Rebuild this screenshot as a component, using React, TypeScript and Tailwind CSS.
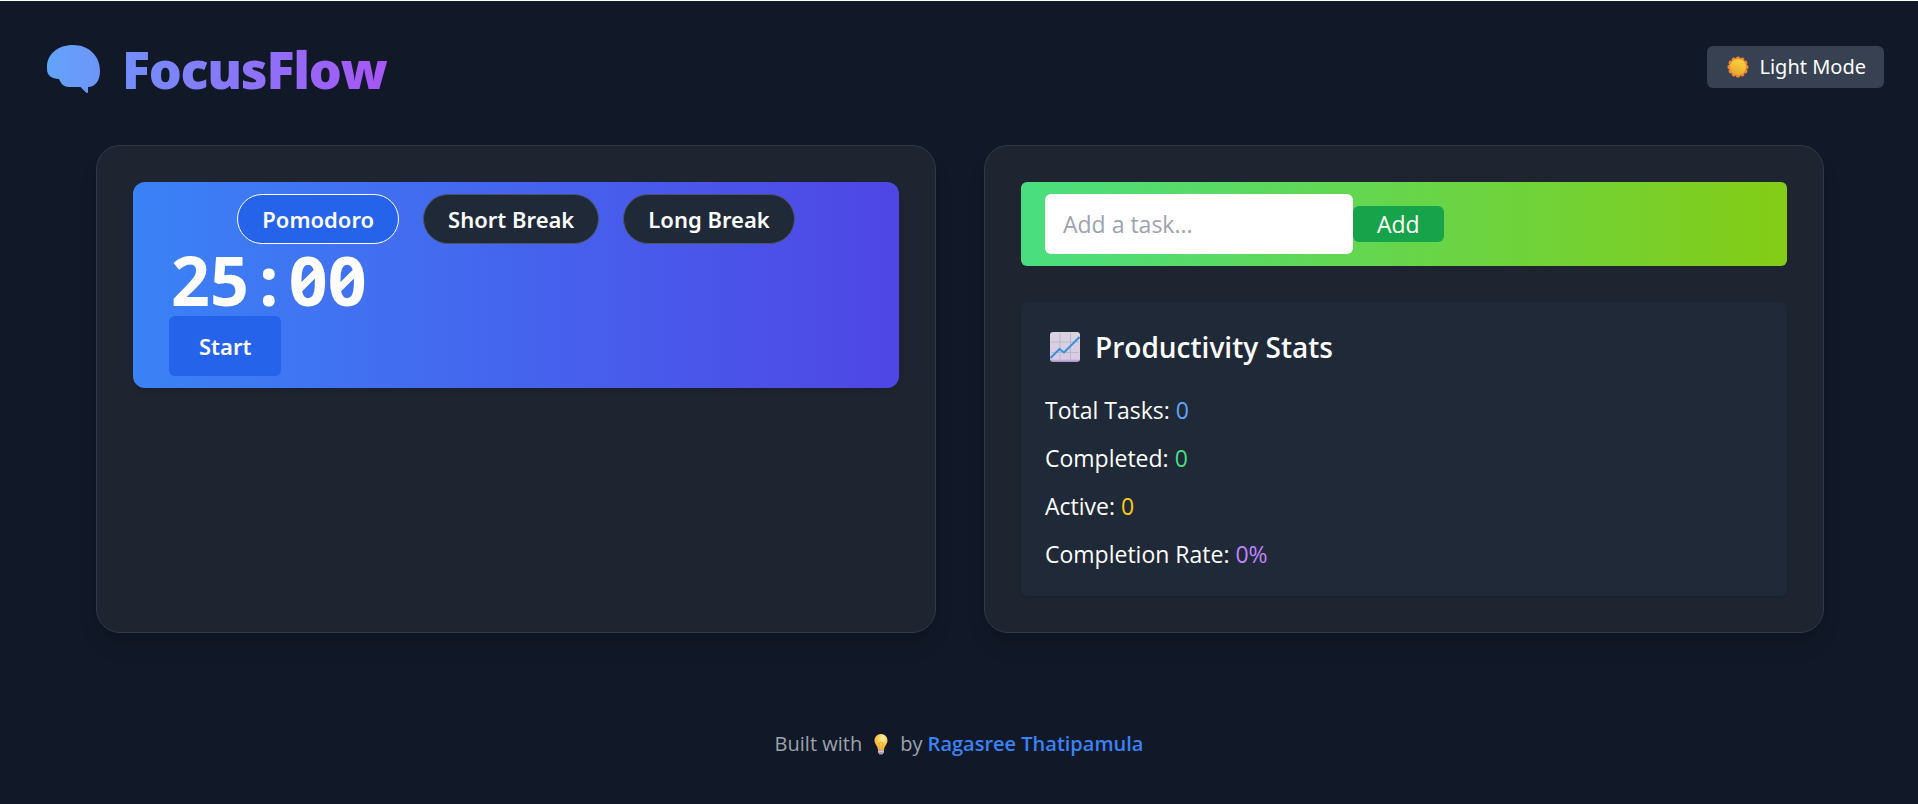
import { useState } from "react";

const modes = [
  { name: "Pomodoro", time: ["25", "00"] },
  { name: "Short Break", time: ["05", "00"] },
  { name: "Long Break", time: ["15", "00"] },
];

const stats = [
  { label: "Total Tasks:", value: "0", color: "text-[#60a5fa]" },
  { label: "Completed:", value: "0", color: "text-[#4ade80]" },
  { label: "Active:", value: "0", color: "text-[#facc15]" },
  { label: "Completion Rate:", value: "0%", color: "text-[#c084fc]" },
];

function BrainIcon() {
  return (
    <svg viewBox="0 0 53 48" className="h-12 w-[53px]" aria-hidden="true">
      <defs>
        <linearGradient id="brain" x1="0" y1="0" x2="1" y2="0">
          <stop offset="0" stopColor="#62a3fa" />
          <stop offset="1" stopColor="#6d95f9" />
        </linearGradient>
      </defs>
      <path
        fill="url(#brain)"
        d="M0 22C0 9 11 0 26 0C42 0 53 11 53 26C53 36 48 42 41 42L41 47.5Q40 48.5 38.5 47L33.500 42L22 42C17 42 14 39 12 34C5 33.500 0 31 0 24Z"
      />
    </svg>
  );
}

function SunIcon() {
  return (
    <svg viewBox="-11 -11 22 22" className="size-[22px]" aria-hidden="true">
      <defs>
        <linearGradient id="sun" x1="0.7" y1="0" x2="0.3" y2="1">
          <stop offset="0" stopColor="#fdd640" />
          <stop offset="1" stopColor="#e5a52e" />
        </linearGradient>
      </defs>
      <g fill="#f0862f">
        <circle r="9" />
        {Array.from({ length: 12 }, (_, i) => (
          <circle key={i} cx="0" cy="-8.4" r="2.2" transform={`rotate(${i * 30})`} />
        ))}
      </g>
      <circle r="8" fill="url(#sun)" />
    </svg>
  );
}

function ChartIcon() {
  return (
    <svg viewBox="0 0 30 30" className="size-[30px]" aria-hidden="true">
      <defs>
        <linearGradient id="paper" x1="0" y1="0" x2="0" y2="1">
          <stop offset="0" stopColor="#d9d4e0" />
          <stop offset="0.9" stopColor="#d8cbe6" />
          <stop offset="1" stopColor="#a98abf" />
        </linearGradient>
      </defs>
      <rect width="30" height="30" rx="3" fill="url(#paper)" />
      <path d="M10 1V29M20.500 1V29M1 10H29M1 20.500H29" stroke="#bdb6c6" strokeWidth="1" />
      <path d="M0.500 26L9.500 17L14 20.500L29.500 5" fill="none" stroke="#3a90d6" strokeWidth="2" />
    </svg>
  );
}

function BulbIcon() {
  return (
    <svg viewBox="0 0 14 21" className="h-[21px] w-3.5" aria-hidden="true">
      <defs>
        <radialGradient id="bulb" cx="0.65" cy="0.25" r="0.7">
          <stop offset="0" stopColor="#fff3b0" />
          <stop offset="0.5" stopColor="#fdd055" />
          <stop offset="1" stopColor="#f5b23c" />
        </radialGradient>
      </defs>
      <path d="M7 0C3 0 0.500 3 0.500 6.500C0.500 10 3.500 11.500 4 16H10C10.500 11.500 13.500 10 13.500 6.500C13.500 3 11 0 7 0Z" fill="url(#bulb)" />
      <path d="M5.500 15.500L5 9Q7 7.500 9 9L8.500 15.500" fill="none" stroke="#eda136" strokeWidth="0.900" />
      <path d="M4 16H10V18.500L8.500 20.500H5.500L4 18.500Z" fill="#a89ab5" />
      <path d="M4 17.800L10 17" stroke="#e3d9ea" strokeWidth="0.800" />
    </svg>
  );
}

const card =
  "rounded-3xl border border-[#323945] bg-[#1f2530] p-9 shadow-[0_15px_22px_-4px_rgba(0,0,0,0.1),0_6px_9px_-4px_rgba(0,0,0,0.1)]";

export default function App() {
  const [mode, setMode] = useState(0);
  const [task, setTask] = useState("");
  const [minutes, seconds] = modes[mode].time;

  return (
    <div className="min-h-screen border-t border-white bg-[#111827] font-['Segoe_UI','Open_Sans','Noto_Sans',sans-serif] text-[23px] leading-9 text-white">
      <header className="flex items-center justify-between py-9 pr-[34px] pl-[47px]">
        <div className="flex items-center gap-[22px] pt-1">
          <BrainIcon />
          <h1 className="bg-linear-to-r/srgb from-[#728ffa] to-[#a855f7] bg-clip-text text-[52px] leading-[56px] font-extrabold tracking-tight text-transparent">
            FocusFlow
          </h1>
        </div>
        <button className="flex h-[42px] items-center gap-2.5 rounded-md bg-[#374151] px-[18px] font-['Noto_Sans',sans-serif] text-xl leading-[30px]">
          <span className="pl-0.5">
            <SunIcon />
          </span>
          Light Mode
        </button>
      </header>

      <main className="grid grid-cols-2 gap-12 pt-3 pr-[94px] pl-24">
        <section className={card}>
          <div className="rounded-xl bg-linear-to-r/srgb from-[#3b82f6] to-[#4f46e5] px-9 py-3 font-['Noto_Sans',sans-serif] text-[22px] leading-9 shadow-md">
            <div className="flex justify-center gap-6">
              {modes.map((m, i) => (
                <button
                  key={m.name}
                  onClick={() => setMode(i)}
                  className={
                    i === mode
                      ? "rounded-full border border-white bg-[#2563eb] px-6 py-1.5 font-semibold"
                      : "rounded-full border border-[#4b5563] bg-[#1f2937] px-6 py-1.5 font-semibold"
                  }
                >
                  {m.name}
                </button>
              ))}
            </div>
            <div className="pl-0.5 text-[68px] leading-[72px] font-bold slashed-zero">
              {minutes}
              <span className="inline-block w-10 text-center">:</span>
              {seconds}
            </div>
            <button className="block rounded-md bg-[#2563eb] px-[30px] py-3 font-semibold">
              Start
            </button>
          </div>
        </section>

        <section className={card}>
          <form
            onSubmit={(e) => e.preventDefault()}
            className="flex items-center rounded-md bg-linear-to-r/srgb from-[#4ade80] to-[#84cc16] px-6 py-3"
          >
            <input
              aria-label="Task"
              placeholder="Add a task..."
              value={task}
              onChange={(e) => setTask(e.target.value)}
              className="h-[60px] w-[308px] rounded-md bg-white px-[18px] text-black placeholder:text-[#9ca3af]"
            />
            <button className="rounded-md bg-[#16a34a] px-6">Add</button>
          </form>

          <div className="mt-9 rounded-md bg-[#1f2937] p-6 shadow-sm">
            <h2 className="mb-6 flex items-center gap-[15px] pl-[5px] text-[28px] leading-[42px] font-semibold">
              <ChartIcon />
              Productivity Stats
            </h2>
            <div className="flex flex-col gap-3">
              {stats.map((s) => (
                <p key={s.label}>
                  {s.label} <span className={s.color}>{s.value}</span>
                </p>
              ))}
            </div>
          </div>
        </section>
      </main>

      <footer className="flex items-center justify-center pt-24 pb-8 text-xl leading-[30px] text-[#9ca3af]">
        Built with
        <span className="mx-3">
          <BulbIcon />
        </span>
        by&nbsp;
        <a href="#author" className="font-semibold text-[#3b82f6]">
          Ragasree Thatipamula
        </a>
      </footer>
    </div>
  );
}
